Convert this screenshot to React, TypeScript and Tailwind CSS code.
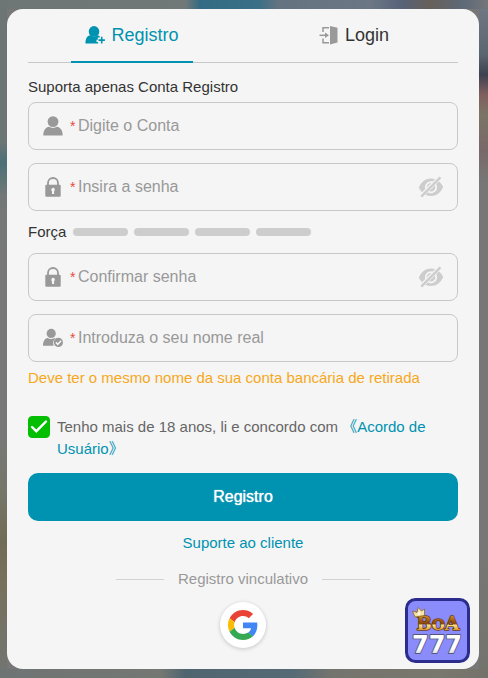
import { useState, type ReactNode } from "react";

function UserIcon() {
  return (
    <svg viewBox="0 0 20 20" className="size-5" fill="#999" aria-hidden="true">
      <circle cx="10" cy="5.6" r="5.4" />
      <path d="M.3 19.6C.3 14 3 11 6 10.8c2.4 1.5 5.6 1.5 8 0 3 .2 5.7 3.200 5.7 8.800z" />
    </svg>
  );
}

function UserPlusIcon() {
  return (
    <svg viewBox="0 0 20 20" className="size-5" fill="#0092b1" aria-hidden="true">
      <circle cx="9" cy="6.4" r="5.3" />
      <path d="M.5 18.5c-.2-4.500 1.500-8 5-8.300 2.200 1.700 5 1.700 7.200 0 1 .2 1.600.6 2.100 1.200v1.100h-2v2.200h-1.300v2.300h1.600v1.500z" />
      <path d="M15.900 11.800h1.600v2.500h2.400v1.600h-2.400v2.500h-1.600v-2.500h-2.400v-1.600h2.400z" />
    </svg>
  );
}

function LoginIcon() {
  return (
    <svg viewBox="0 0 20 20" className="size-5" aria-hidden="true">
      <path d="M11 1l7.5 1.800v14.800L11 19.500z" fill="#999" />
      <path d="M10 2.700H4v4.400M4 13.500v4.300h6" fill="none" stroke="#999" strokeWidth="1.5" />
      <path d="M.5 10.300h7" fill="none" stroke="#999" strokeWidth="1.5" />
      <path d="M6 7.500l4 2.800-4 2.800z" fill="#999" />
    </svg>
  );
}

function LockIcon() {
  return (
    <svg viewBox="0 0 20 20" className="size-5" aria-hidden="true">
      <path d="M5 9V6a5 5 0 0 1 10 0v3" fill="none" stroke="#999" strokeWidth="1.8" />
      <rect x="2.3" y="7.800" width="15.400" height="12" rx="1" fill="#999" />
      <path d="M10 10.800a1.900 1.900 0 0 1 1.100 3.400v2.800H9v-2.800a1.900 1.900 0 0 1 1-3.400z" fill="#f5f5f5" />
    </svg>
  );
}

function UserCheckIcon() {
  return (
    <svg viewBox="0 0 20 20" className="size-5" aria-hidden="true">
      <circle cx="8.200" cy="5.400" r="4.600" fill="#999" />
      <path d="M0 17.700c0-4.300 1.600-7.300 4.600-7.700 2.200 1.400 5 1.400 7.100 0 .5.100.7.300 1 .5-2.700 1.700-3.200 4.900-2 7.200z" fill="#999" />
      <circle cx="15.400" cy="14.400" r="4.600" fill="#999" />
      <path d="M12.900 14.400l1.900 1.900 3.300-3.500" fill="none" stroke="#f5f5f5" strokeWidth="1.5" />
    </svg>
  );
}

function EyeOffIcon() {
  return (
    <svg viewBox="0 0 26 22" className="h-[22px] w-[26px]" aria-hidden="true">
      <path d="M.8 11.500C3.500 5.500 7.800 2.500 13 2.500s9.500 3 12.200 8.500c-2.700 6-7 9-12.200 9s-9.500-3-12.200-8.500z" fill="#cdcdcd" />
      <circle cx="13" cy="11.300" r="5.200" fill="none" stroke="#f5f5f5" strokeWidth="1.800" />
      <circle cx="13" cy="11.300" r="1.500" fill="#f5f5f5" />
      <path d="M4.500 18.700L20.500 2.700" stroke="#f5f5f5" strokeWidth="4.200" />
      <path d="M3.200 20.600L22.400 1.400" stroke="#cdcdcd" strokeWidth="2.400" />
    </svg>
  );
}

function GoogleIcon() {
  return (
    <svg viewBox="0 0 48 48" className="size-[30px]" aria-hidden="true">
      <path fill="#ea4335" d="M24 9.500c3.540 0 6.710 1.220 9.210 3.600l6.850-6.850C35.900 2.380 30.470 0 24 0 14.620 0 6.510 5.380 2.560 13.220l7.980 6.190C12.430 13.720 17.740 9.500 24 9.500z" />
      <path fill="#4285f4" d="M46.980 24.550c0-1.570-.15-3.090-.38-4.550H24v9.020h12.940c-.58 2.960-2.260 5.480-4.780 7.180l7.730 6c4.510-4.180 7.090-10.360 7.090-17.650z" />
      <path fill="#fbbc05" d="M10.530 28.590c-.48-1.450-.76-2.990-.76-4.590s.27-3.140.76-4.590l-7.980-6.190C.92 16.460 0 20.120 0 24c0 3.880.92 7.540 2.560 10.780l7.970-6.190z" />
      <path fill="#34a853" d="M24 48c6.480 0 11.930-2.130 15.890-5.810l-7.730-6c-2.150 1.450-4.920 2.300-8.160 2.300-6.260 0-11.570-4.220-13.470-9.910l-7.980 6.190C6.510 42.620 14.620 48 24 48z" />
    </svg>
  );
}

function BrandBadge() {
  return (
    <svg viewBox="0 0 65 65" className="size-[65px]" role="img" aria-label="BOA 777">
      <defs>
        <linearGradient id="gold" gradientUnits="userSpaceOnUse" x1="0" y1="18" x2="0" y2="32">
          <stop offset="0" stopColor="#c98a2c" />
          <stop offset=".3" stopColor="#a85f12" />
          <stop offset=".55" stopColor="#8c4708" />
          <stop offset=".65" stopColor="#ffe58a" />
          <stop offset="1" stopColor="#d9952a" />
        </linearGradient>
        <linearGradient id="silver" gradientUnits="userSpaceOnUse" x1="0" y1="38" x2="0" y2="56">
          <stop offset="0" stopColor="#fff" />
          <stop offset=".7" stopColor="#fff" />
          <stop offset="1" stopColor="#d2d2dc" />
        </linearGradient>
      </defs>
      <rect x="1.5" y="1.5" width="62" height="62" rx="9" fill="#8a8cfb" stroke="#2c2c8c" strokeWidth="3" />
      <g fontWeight="700" textAnchor="middle" paintOrder="stroke" strokeLinejoin="round">
        <text x="33" y="32" fontFamily="DejaVu Serif, serif" fontSize="18" fill="url(#gold)" stroke="#6b3c12" strokeWidth="1.6">
          B<tspan fontSize="15">O</tspan><tspan fontSize="19">A</tspan>
        </text>
        <text x="32" y="55" fontFamily="DejaVu Sans, sans-serif" fontSize="24" fill="url(#silver)" stroke="#55567c" strokeWidth="1.8">777</text>
      </g>
      <path d="M10 19L7.500 13l4.500 1.500 1.200-5 3.300 3.500 3-2 0 6.500z" fill="#f9e3a4" stroke="#8a6425" strokeWidth=".8" />
      <circle cx="14" cy="15.500" r="1.300" fill="#fff" />
    </svg>
  );
}

type FieldProps = { id: string; label: string; icon: ReactNode; secret?: boolean };

function Field({ id, label, icon, secret = false }: FieldProps) {
  const [shown, setShown] = useState(false);
  return (
    <div className="flex h-12 items-center rounded-lg border border-[#c8c8c8] pr-[13px] pl-3.5">
      <label htmlFor={id} className="flex items-center">
        {icon}
        <span className="ml-[7px] w-2 text-sm leading-6 text-[#e84c3d]">*</span>
      </label>
      <input
        id={id}
        type={secret && !shown ? "password" : "text"}
        placeholder={label}
        aria-label={label}
        className="min-w-0 flex-1 bg-transparent text-base text-[#333] outline-none placeholder:text-[#999]"
      />
      {secret && (
        <button type="button" aria-label="Mostrar senha" onClick={() => setShown(!shown)}>
          <EyeOffIcon />
        </button>
      )}
    </div>
  );
}

export default function App() {
  return (
    <main className="min-h-screen bg-[#777] bg-[linear-gradient(90deg,#6d7675_0%,#717978_38%,#326b83_41%,#397087_53%,#647380_57%,#6c7684_76%,#56637a_82%,#665f59_88%,#5d6a78_95%,#747678_100%),linear-gradient(90deg,#6e7474_0%,#747772_33%,#4e6570_38%,#566a76_60%,#74746e_68%,#79786e_90%,#74716a_100%),linear-gradient(180deg,#6c7474_0%,#6c7575_21%,#4b7075_24%,#727877_29%,#777_38%,#777_64%,#77766a_72%,#716b55_80%,#77705c_86%,#717672_100%),linear-gradient(180deg,#727a86_0%,#5c6672_8%,#3d4250_11%,#805f5e_14%,#7b7566_17%,#79686a_22%,#777_27%,#777_80%,#73736e_100%)] bg-[length:100%_9px,100%_9px,7px_100%,9px_100%] bg-[position:top,bottom,left,right] bg-no-repeat py-[9px] pr-[9px] pl-[7px] font-['Liberation_Sans',Arial,'Noto_Sans_CJK_SC',sans-serif] text-[15px] text-[#333]">
      <section className="relative rounded-2xl bg-[#f5f5f5] px-[21px] pb-[21px]">
        <nav className="flex h-[54px] justify-between border-b border-[#c8c8c8] px-[43px] text-lg">
          <button type="button" className="-mb-px flex w-[122px] items-center justify-center border-b-2 border-[#0092b1] text-[#0092b1]">
            <UserPlusIcon />
            <span className="ml-1.5">Registro</span>
          </button>
          <button type="button" className="-mb-px flex w-[122px] items-center justify-center border-b-2 border-transparent text-[#333]">
            <LoginIcon />
            <span className="ml-1.5">Login</span>
          </button>
        </nav>

        <form onSubmit={(e) => e.preventDefault()}>
          <p className="pt-3.5 pb-[5px] leading-5">Suporta apenas Conta Registro</p>
          <div className="flex flex-col gap-[13px]">
            <Field id="conta" label="Digite o Conta" icon={<UserIcon />} />
            <Field id="senha" label="Insira a senha" icon={<LockIcon />} secret />
          </div>
          <div className="flex h-[42px] items-center gap-[7px]">
            <span>Força</span>
            <span className="flex gap-1.5">
              <span className="h-2 w-[55px] rounded-full bg-[#cdcdcd]" />
              <span className="h-2 w-[55px] rounded-full bg-[#cdcdcd]" />
              <span className="h-2 w-[55px] rounded-full bg-[#cdcdcd]" />
              <span className="h-2 w-[55px] rounded-full bg-[#cdcdcd]" />
            </span>
          </div>
          <div className="flex flex-col gap-[13px]">
            <Field id="confirmar" label="Confirmar senha" icon={<LockIcon />} secret />
            <Field id="nome" label="Introduza o seu nome real" icon={<UserCheckIcon />} />
          </div>
          <p className="pt-1.5 leading-5 text-[#f7a81b]">Deve ter o mesmo nome da sua conta bancária de retirada</p>

          <div className="mt-7 flex items-start gap-[7px]">
            <span className="grid shrink-0 place-items-center">
              <input
                id="acordo"
                type="checkbox"
                defaultChecked
                className="peer col-start-1 row-start-1 size-[22px] appearance-none rounded border border-[#04be02] checked:bg-[#04be02]"
              />
              <svg viewBox="0 0 22 22" className="pointer-events-none invisible col-start-1 row-start-1 size-[22px] peer-checked:visible" aria-hidden="true">
                <path d="M4 11l4.300 4.200L18 5.500" fill="none" stroke="#fff" strokeWidth="2.400" strokeLinecap="round" />
              </svg>
            </span>
            <p className="leading-[22px] text-[#666]">
              <label htmlFor="acordo">Tenho mais de 18 anos, li e concordo com</label>{" "}
              <a href="#acordo" className="text-[#0092b1]">《Acordo de Usuário》</a>
            </p>
          </div>

          <button type="submit" className="mt-[13px] block h-12 w-full rounded-[10px] bg-[#0092b1] text-base text-white text-shadow-[0_0_1px_#fff]">
            Registro
          </button>
        </form>

        <a href="#suporte" className="mx-auto mt-3 block w-fit leading-5 text-[#0092b1]">Suporte ao cliente</a>
        <div className="mt-4 flex items-center justify-center gap-3.5 leading-5 text-[#999]">
          <span className="h-px w-12 bg-[#d2d2d2]" />
          <span>Registro vinculativo</span>
          <span className="h-px w-12 bg-[#d2d2d2]" />
        </div>
        <button type="button" aria-label="Google" className="mx-auto mt-[13px] grid size-[46px] place-items-center rounded-full bg-white shadow-[0_1px_4px_rgba(0,0,0,0.2)]">
          <GoogleIcon />
        </button>

        <a href="#boa777" className="absolute right-[9px] bottom-1.5">
          <BrandBadge />
        </a>
      </section>
    </main>
  );
}
